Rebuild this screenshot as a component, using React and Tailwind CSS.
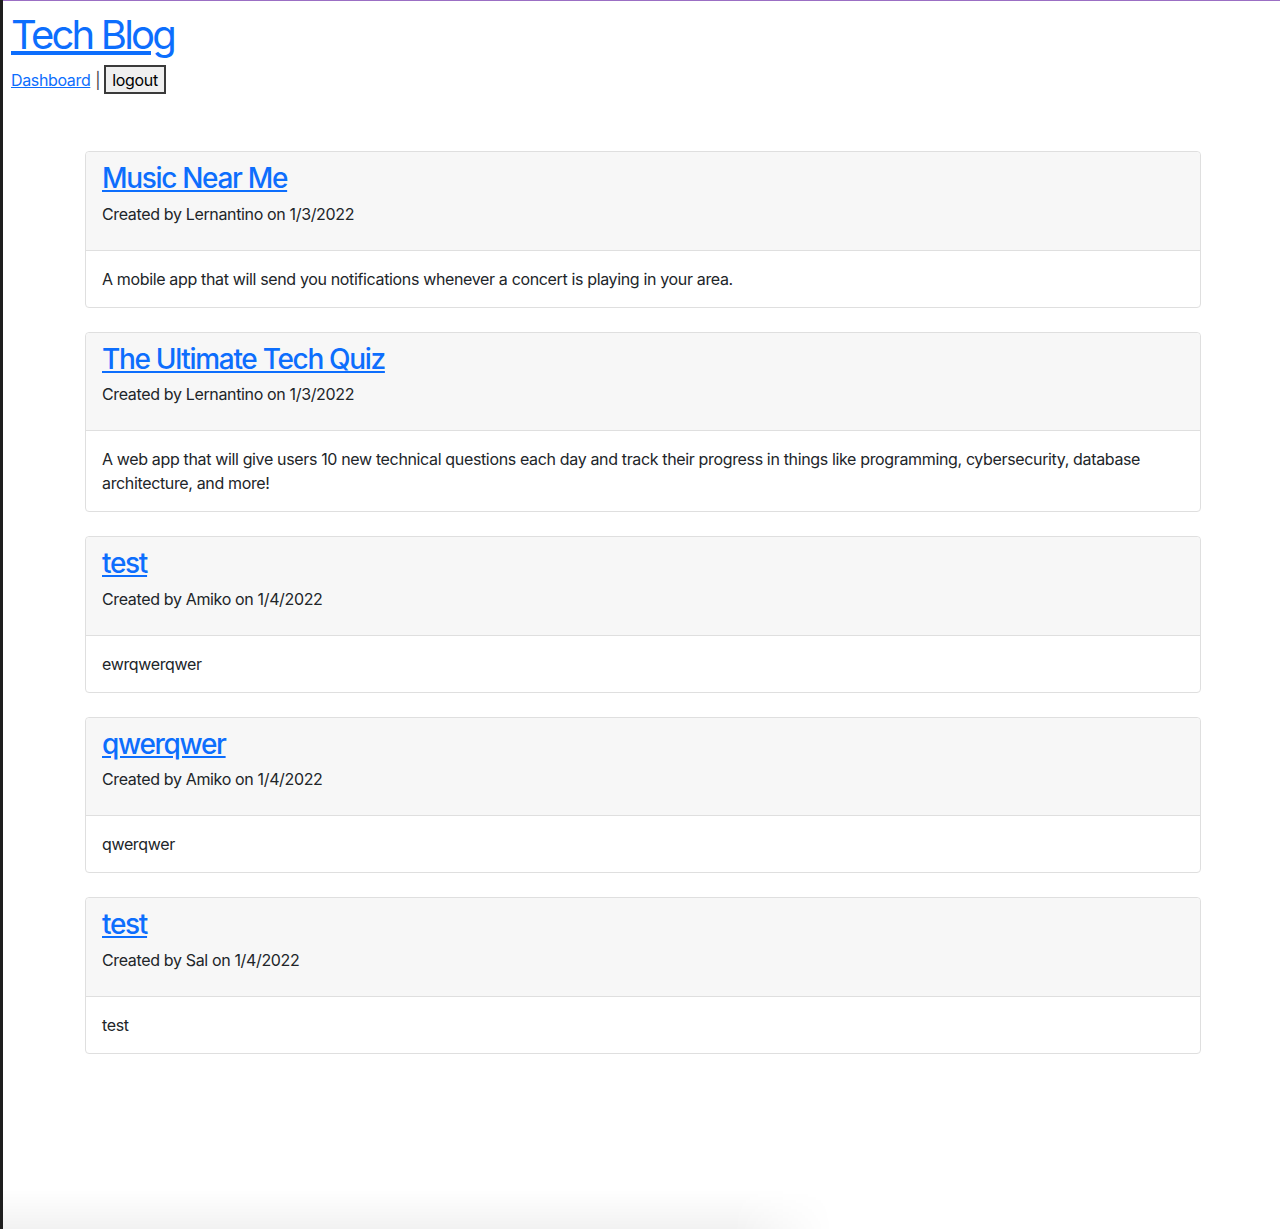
const posts = [
  {
    title: 'Music Near Me',
    author: 'Lernantino',
    date: '1/3/2022',
    body: 'A mobile app that will send you notifications whenever a concert is playing in your area.',
  },
  {
    title: 'The Ultimate Tech Quiz',
    author: 'Lernantino',
    date: '1/3/2022',
    body: 'A web app that will give users 10 new technical questions each day and track their progress in things like programming, cybersecurity, database architecture, and more!',
  },
  { title: 'test', author: 'Amiko', date: '1/4/2022', body: 'ewrqwerqwer' },
  { title: 'qwerqwer', author: 'Amiko', date: '1/4/2022', body: 'qwerqwer' },
  { title: 'test', author: 'Sal', date: '1/4/2022', body: 'test' },
];

function PostCard({ post }) {
  return (
    <div className="mb-6 rounded border border-[#dfdfdf] bg-white">
      <div className="border-b border-[#dfdfdf] bg-[#f7f7f7] px-4 pt-[10px] pb-2 rounded-t">
        <h3 className="mb-[6px] text-[28px] leading-[1.2] font-medium tracking-[-0.047em]">
          <a href="#" className="text-[#0d6efd] underline">{post.title}</a>
        </h3>
        <p className="mb-4 leading-6">
          Created by {post.author} on {post.date}
        </p>
      </div>
      <div className="p-4 leading-6">{post.body}</div>
    </div>
  );
}

export default function App() {
  return (
    <div className="flex min-h-[1229px] bg-[#1e1e1e] font-['Inter',sans-serif] text-base tracking-[-0.022em] text-[#212529]">
      <div className="w-[3px] shrink-0" />
      <div className="flex flex-1 flex-col bg-white border-t border-[#9b6fc4]">
        {/* Header */}
        <header className="px-2 pt-[10px]">
          <h1 className="text-[40px] leading-[1.2] font-normal tracking-[-0.07em]">
            <a href="#" className="text-[#0d6efd] underline">Tech Blog</a>
          </h1>
          <nav className="mt-[6px] flex items-center">
            <a href="#" className="text-[#0d6efd] underline">Dashboard</a>
            <span className="ml-[5px] mr-[4px] text-[#444]">|</span>
            <button className="border-2 border-[#3a3a3a] bg-[#efefef] px-[6px] h-[29px] leading-none text-black">
              logout
            </button>
          </nav>
        </header>

        {/* Posts */}
        <main className="mt-[57px] ml-[82px] w-[1116px]">
          {posts.map((post, i) => (
            <PostCard key={i} post={post} />
          ))}
        </main>

        <div className="flex-1" />
        <div className="h-[40px] w-[830px] bg-[linear-gradient(to_bottom,rgba(0,0,0,0),rgba(0,0,0,0.05))] [mask-image:linear-gradient(to_right,black_88%,transparent)]" />
      </div>
    </div>
  );
}
